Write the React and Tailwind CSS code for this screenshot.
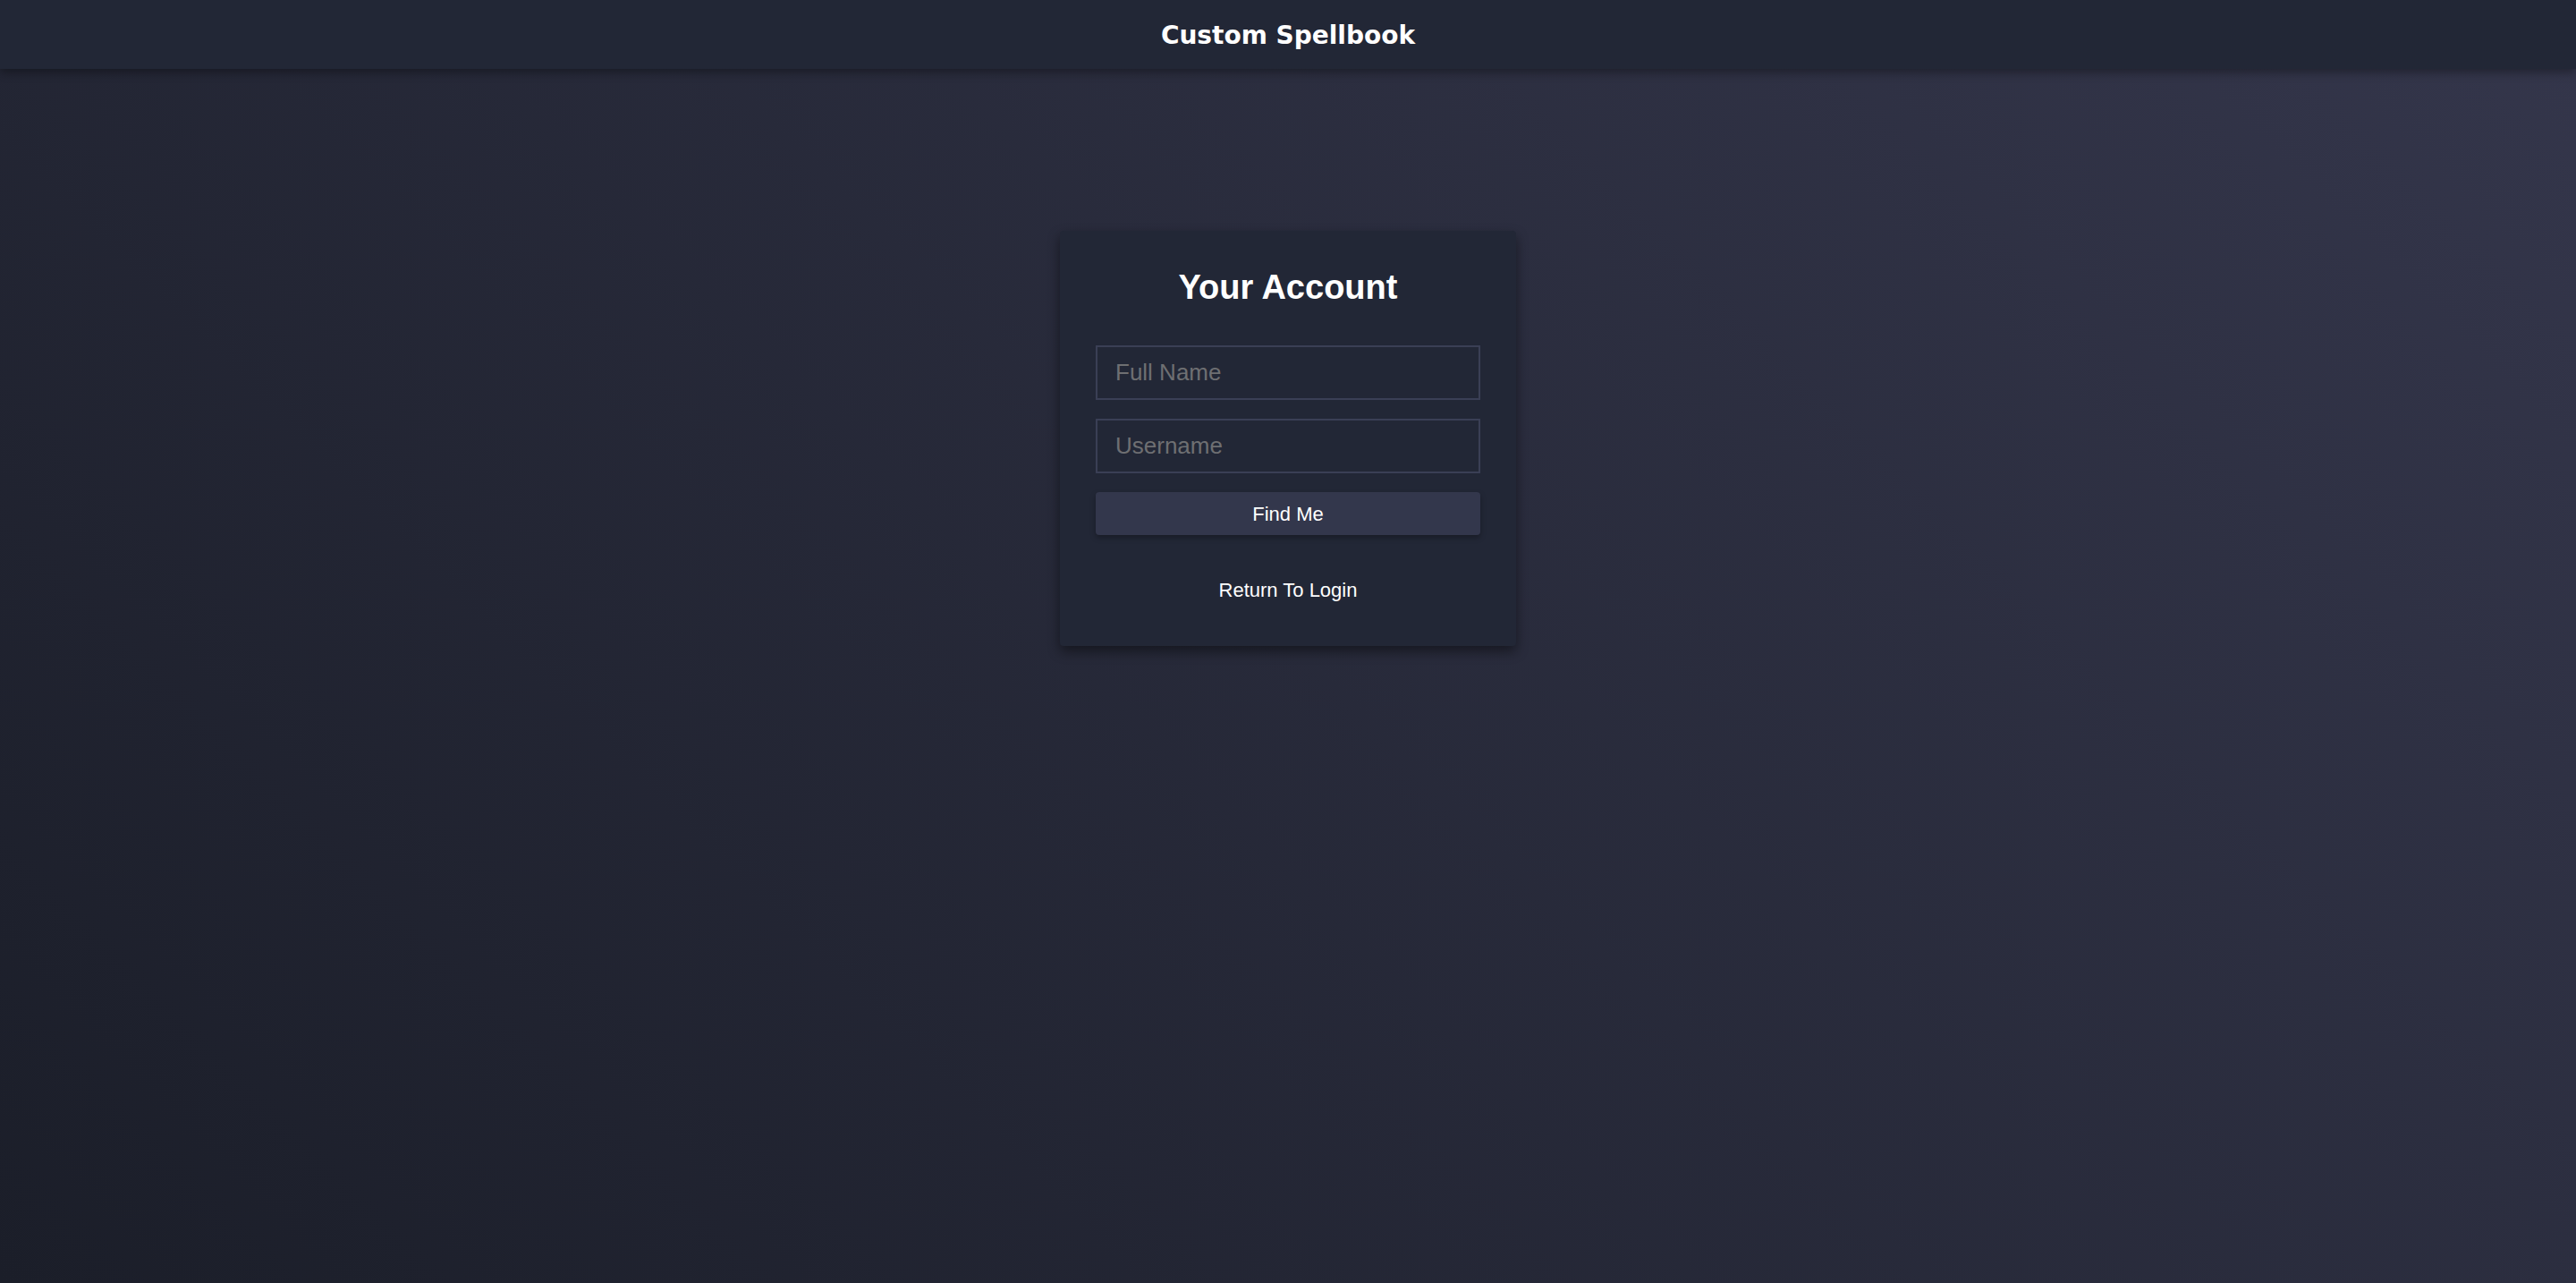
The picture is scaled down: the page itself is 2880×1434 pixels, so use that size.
import React, { useState } from 'react';

const App = () => {
  const [fullName, setFullName] = useState('');
  const [username, setUsername] = useState('');

  return (
    <div className="min-h-screen w-full flex flex-col bg-[linear-gradient(45deg,#1b1e29,#34364b)] font-['Liberation_Sans',Arial,sans-serif]">
      {/* Top bar */}
      <header className="relative z-10 h-[77px] flex items-center justify-center pt-[3px] bg-[#222736] shadow-[0_4px_10px_rgba(0,0,0,0.35)]">
        <h1 className="text-[28px] font-bold text-white font-['DejaVu_Sans',sans-serif]">Custom Spellbook</h1>
      </header>

      {/* Account recovery card */}
      <main className="flex justify-center pt-[181px]">
        <div className="w-[510px] bg-[#222736] rounded-[4px] px-[40px] pt-[41px] pb-[48px] shadow-[0_6px_14px_rgba(0,0,0,0.45)]">
          <h2 className="text-center text-white font-bold text-[38px] leading-[44px] mb-[43px]">Your Account</h2>

          <form className="flex flex-col" onSubmit={(e) => e.preventDefault()}>
            <input
              type="text"
              value={fullName}
              onChange={(e) => setFullName(e.target.value)}
              placeholder="Full Name"
              className="h-[61px] mb-[21px] px-[20px] bg-transparent border-2 border-[#3a3f55] text-[26px] text-white placeholder:text-[#6e6f72] outline-none"
            />
            <input
              type="text"
              value={username}
              onChange={(e) => setUsername(e.target.value)}
              placeholder="Username"
              className="h-[61px] mb-[21px] px-[20px] bg-transparent border-2 border-[#3a3f55] text-[26px] text-white placeholder:text-[#6e6f72] outline-none"
            />
            <button
              type="submit"
              className="h-[48px] bg-[#33374c] rounded-[4px] text-white text-[22px] shadow-[0_3px_6px_rgba(0,0,0,0.3)]"
            >
              Find Me
            </button>
          </form>

          <div className="mt-[49px] text-center">
            <a href="#" className="text-white text-[22px] leading-[25px]">Return To Login</a>
          </div>
        </div>
      </main>
    </div>
  );
};

export default App;
